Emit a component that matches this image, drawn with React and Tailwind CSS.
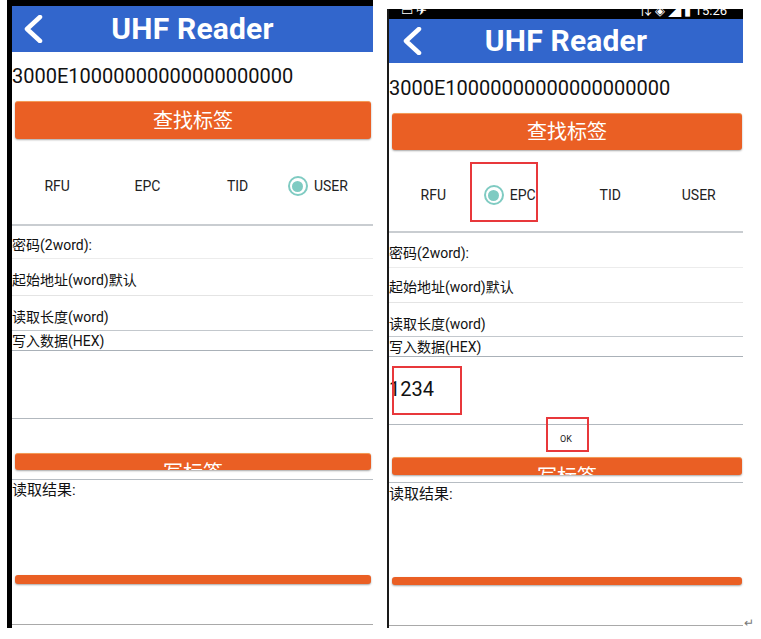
import React from "react";

const Chevron = () => (
  <svg width="20" height="28" viewBox="0 0 20 28" fill="none">
    <path d="M17 2 L4 14 L17 26" stroke="white" strokeWidth="4.5" strokeLinecap="round" strokeLinejoin="round" />
  </svg>
);

const Radio = () => (
  <span className="w-[20px] h-[20px] rounded-full border-2 border-[#7fcbc2] flex items-center justify-center">
    <span className="w-[11px] h-[11px] rounded-full bg-[#7fcbc2]" />
  </span>
);

const Header = ({ cls, pad }) => (
  <div className={`grid grid-cols-[1fr_auto_1fr] items-center bg-[#3266cc] ${cls}`}>
    <div className={pad}>
      <Chevron />
    </div>
    <div className="text-white text-[30px] font-bold leading-none tracking-[0.2px]">UHF Reader</div>
    <div />
  </div>
);

const Field = ({ cls, text }) => (
  <div className={`text-[14px] leading-[20px] text-[#111] ${cls}`}>{text}</div>
);

const Panel = ({ right }) => {
  const sel = right ? "EPC" : "USER";
  const opts = ["RFU", "EPC", "TID", "USER"];
  return (
    <div className="flex flex-col">
      {/* TOP BAR + HEADER */}
      {right ? (
        <div className="h-[10px] bg-black overflow-hidden flex justify-between px-3">
          <span className="text-white text-[13px] leading-none -mt-[5px]">▭ ✈</span>
          <span className="text-white text-[13px] leading-none -mt-[5px] pr-1">⇅ ◈ ◢ ▮ 15:26</span>
        </div>
      ) : (
        <div className="h-[6px] bg-black" />
      )}
      {right ? <Header cls="h-[44px]" pad="pl-[13px]" /> : <Header cls="h-[46px]" pad="pl-[11px]" />}

      <div className={`${right ? "h-[49px]" : "h-[48px]"} flex items-center text-[20px] text-[#111]`}>
        3000E10000000000000000000
      </div>

      {/* FIND BUTTON */}
      <div className={`mt-[1px] ${right ? "h-[37px] ml-[3px] mr-[1px]" : "h-[38px] ml-[3px] mr-[2px]"} bg-[#ea5f24] border-t border-[#f49a56] rounded-[3px] shadow-[0_1px_2px_rgba(0,0,0,0.35)] flex items-center justify-center text-white text-[20px]`}>
        查找标签
      </div>

      {/* RADIO ROW */}
      <div className={`${right ? "h-[83px] pt-[35px]" : "h-[87px] pt-[37px]"} grid grid-cols-4 border-b-2 border-[#c9cdd1]`}>
        {opts.map((o) => (
          <div
            key={o}
            className={`h-[20px] flex items-center justify-center gap-[6px] text-[14px] text-[#222] ${
              o === sel ? (right ? "pr-[24px]" : "pr-[20px]") : ""
            }`}
          >
            {o === sel && <Radio />}
            {o}
          </div>
        ))}
      </div>

      {/* FIELDS */}
      <Field cls={right ? "h-[35px] pt-[10px] border-b border-[#ececec]" : "h-[33px] pt-[9px] border-b border-[#ececec]"} text="密码(2word):" />
      <Field cls={right ? "h-[35px] pt-[9px] border-b border-[#e4e4e4]" : "h-[37px] pt-[11px] border-b border-[#e4e4e4]"} text="起始地址(word)默认" />
      <Field cls={right ? "h-[34px] pt-[11px] border-b border-[#c3c8cd]" : "h-[35px] pt-[11px] border-b border-[#c3c8cd]"} text="读取长度(word)" />
      <Field cls="h-[20px] border-b border-[#aab1b8] leading-[18px]" text="写入数据(HEX)" />

      {/* INPUT AREA */}
      <div className="h-[68px] border-b border-[#b2b8be]">
        {right && <div className="pt-[22px] text-[20px] leading-[20px] text-[#111]">1234</div>}
      </div>

      <div className={`${right ? "h-[32px]" : "h-[34px]"} flex justify-center`}>
        {right && <span className="pt-[9px] text-[9px] leading-[10px] text-[#222]">OK</span>}
      </div>

      {/* WRITE BUTTON (clipped) */}
      <div className={`${right ? "h-[18px] ml-[3px] mr-[1px]" : "h-[17px] ml-[3px] mr-[2px]"} bg-[#ea5f24] border-t border-[#f49a56] rounded-[3px] shadow-[0_1px_2px_rgba(0,0,0,0.35)] overflow-hidden flex justify-center`}>
        <span className="pt-[9px] text-white text-[20px] leading-[20px]">写标签</span>
      </div>

      <div className={`${right ? "h-[7px]" : "h-[9px]"} border-b border-[#b7bdc3] box-content`} />

      {/* RESULT */}
      <div className={`${right ? "h-[94px] pt-[1px]" : "h-[95px]"} text-[15px] leading-[20px] text-[#111]`}>读取结果:</div>

      <div className={`${right ? "h-[8px] ml-[3px] mr-[1px]" : "h-[9px] ml-[3px] mr-[2px]"} bg-[#ea5f24] rounded-[3px] shadow-[0_1px_2px_rgba(0,0,0,0.35)]`} />

      <div className="h-[40px] border-b border-[#a9a9a9] box-content" />

      {/* ANNOTATIONS */}
      {right && (
        <>
          <div className="absolute left-[81px] top-[153px] w-[68px] h-[60px] border-2 border-[#e8383b]" />
          <div className="absolute left-[3px] top-[357px] w-[70px] h-[49px] border-2 border-[#e8383b]" />
          <div className="absolute left-[157px] top-[408px] w-[43px] h-[35px] border-2 border-[#e8383b]" />
        </>
      )}
    </div>
  );
};

export default function App() {
  return (
    <div className="w-[761px] h-[639px] bg-white flex overflow-hidden font-['Roboto','Noto_Sans_CJK_SC',sans-serif]">
      <div className="ml-[7px] w-[366px] h-[628px] border-l-[5px] border-black">
        <Panel />
      </div>
      <div className="ml-[14px] mt-[9px] w-[356px] h-[619px] border-l-2 border-[#1a1a1a] relative">
        <Panel right />
      </div>
      <div className="self-end mb-[10px] ml-[1px] text-[12px] leading-none text-[#777]">↵</div>
    </div>
  );
}
